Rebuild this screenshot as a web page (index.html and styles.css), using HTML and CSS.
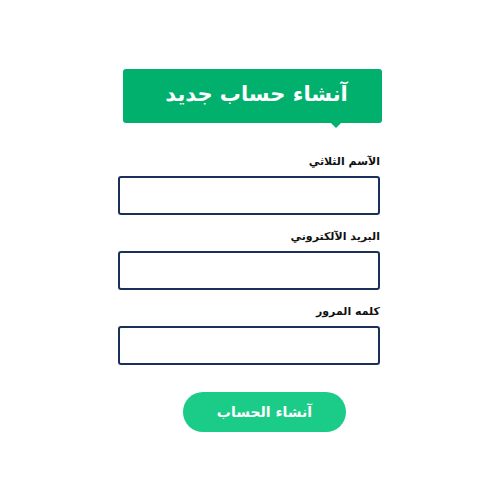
FILE: index.html
```html
<!DOCTYPE html>
<html lang="ar" dir="rtl">
<head>
    <meta charset="UTF-8">
    <title>آنشاء حساب جديد</title>
    <link rel="stylesheet" href="styles.css">
</head>
<body>
<div class="form-wrap">
    <h1 class="title">آنشاء حساب جديد</h1>

    <label class="field-label">الآسم الثلاثي</label>
    <input type="text" class="field">

    <label class="field-label">البريد الآلكتروني</label>
    <input type="email" class="field">

    <label class="field-label">كلمه المرور</label>
    <input type="password" class="field">

    <div class="actions">
        <button class="submit">آنشاء الحساب</button>
    </div>
</div>
</body>
</html>
```

FILE: styles.css
```css
body {
    margin: 0;
    background-color: #fff;
    font-family: "DejaVu Sans", "Noto Sans", sans-serif;
    color: #111;
}
.form-wrap {
    width: 264px;
    margin: 69px auto 0;
    display: flex;
    flex-direction: column;
}
.title {
    position: relative;
    margin: 0 0 32px 0;
    width: 259px;
    height: 54px;
    box-sizing: border-box;
    padding-left: 8px;
    align-self: flex-start;
    background-color: #02b06d;
    border-radius: 3px;
    color: #fff;
    font-size: 21px;
    font-weight: bold;
    line-height: 50px;
    text-align: center;
}
.title::after {
    content: "";
    position: absolute;
    bottom: -5px;
    left: 208px;
    border-left: 5px solid transparent;
    border-right: 5px solid transparent;
    border-top: 5px solid #02b06d;
}
.field-label {
    font-size: 11px;
    font-weight: bold;
    margin-bottom: 8px;
    margin-right: 2px;
}
.field {
    box-sizing: border-box;
    height: 39px;
    width: 262px;
    align-self: flex-end;
    border: 2px solid #1b2f5b;
    border-radius: 3px;
    margin-bottom: 15px;
    font-size: 14px;
}
.actions {
    display: flex;
    justify-content: center;
    margin-top: 12px;
}
.submit {
    width: 163px;
    height: 40px;
    border: none;
    border-radius: 20px;
    background-color: #1bcb88;
    color: #fff;
    font-family: inherit;
    font-size: 14px;
    font-weight: bold;
    margin-left: 29px;
    cursor: pointer;
}
```
